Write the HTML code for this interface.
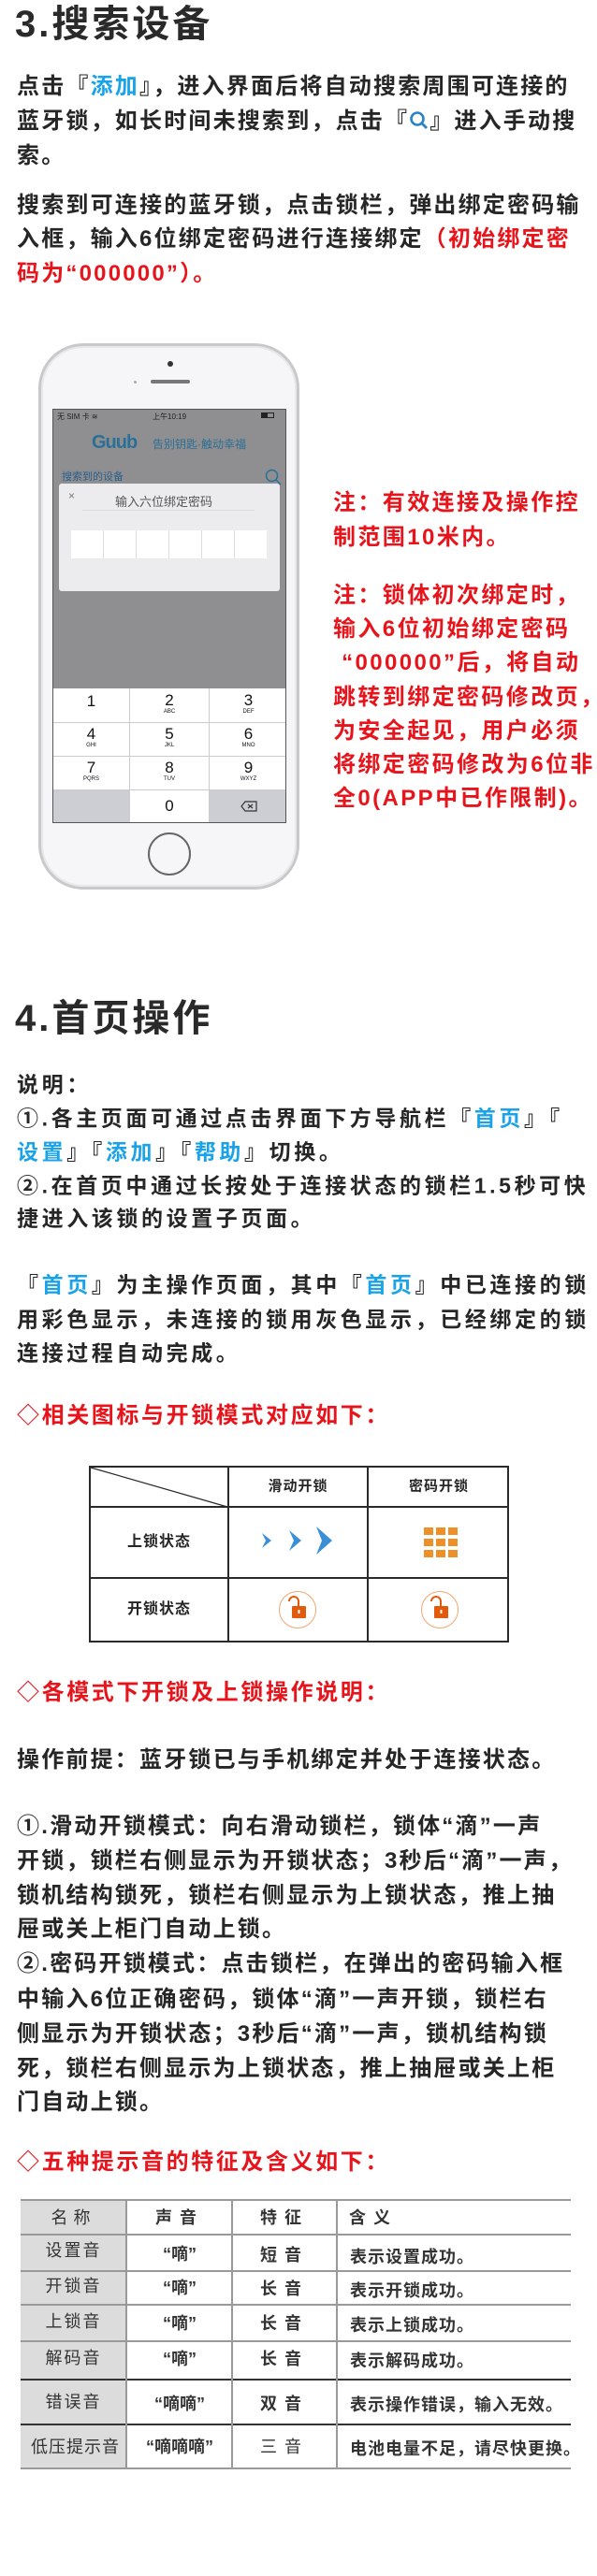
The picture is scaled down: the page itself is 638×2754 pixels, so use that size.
<!DOCTYPE html>
<html><head><meta charset="utf-8">
<style>
*{margin:0;padding:0;box-sizing:border-box}
body{width:638px;height:2754px;background:#fff;position:relative;overflow:hidden;font-family:"Liberation Sans","Noto Sans CJK SC",sans-serif;color:#262626}
.l{position:absolute;white-space:nowrap;font-weight:700;line-height:1;transform:translateY(-50%)}
.t{font-size:24px;letter-spacing:2.2px;left:18px}
.t4{font-size:23px;letter-spacing:3.6px;left:18px}
.h{font-size:40px;letter-spacing:3px;left:16px;color:#2a2a2a}
.r{color:#e8141b}
.b{color:#1aa3e8}
.n{font-size:24px;letter-spacing:2.4px;left:356px;color:#e8141b}
.rh{font-size:24px;letter-spacing:2.6px;left:18px;color:#e8141b}
.abs{position:absolute}
</style></head><body>

<div class="l h" style="top:26px">3.搜索设备</div>
<div class="l t" style="top:93px">点击『<span class="b">添加</span>』，进入界面后将自动搜索周围可连接的</div>
<div class="l t" style="top:130px">蓝牙锁，如长时间未搜索到，点击『<svg width="22" height="22" viewBox="0 0 22 22" style="vertical-align:-3px"><circle cx="9" cy="9" r="6.5" fill="none" stroke="#2a84c6" stroke-width="2.6"/><path d="M14 14l5 5" stroke="#2a84c6" stroke-width="2.8"/></svg>』进入手动搜</div>
<div class="l t" style="top:167px">索。</div>
<div class="l t" style="top:220px">搜索到可连接的蓝牙锁，点击锁栏，弹出绑定密码输</div>
<div class="l t" style="top:256px">入框，输入6位绑定密码进行连接绑定<span class="r">（初始绑定密</span></div>
<div class="l t r" style="top:293px">码为“000000”）。</div>

<!-- phone -->
<div class="abs" style="left:41px;top:367px;width:279px;height:584px;border-radius:48px;background:#f6f6f8;border:3px solid #c9c9cc;box-shadow:inset 0 0 0 2px #e8e8ea"></div>
<div class="abs" style="left:179px;top:386px;width:6px;height:6px;border-radius:3px;background:#333"></div>
<div class="abs" style="left:161px;top:406px;width:42px;height:4px;border-radius:2px;background:#777"></div>
<div class="abs" style="left:143px;top:407px;width:3px;height:3px;border-radius:2px;background:#aaa"></div>
<div class="abs" style="left:56px;top:437px;width:250px;height:443px;background:#8f8f92;border:1px solid #555;overflow:hidden">
  <div class="abs" style="left:4px;top:2px;font-size:8px;color:#222">无 SIM 卡 ≋</div>
  <div class="abs" style="left:106px;top:2px;font-size:8px;color:#222">上午10:19</div>
  <div class="abs" style="left:222px;top:3px;width:14px;height:6px;border:1px solid #222"><div style="width:6px;height:4px;background:#222"></div></div>
  <div class="abs" style="left:41px;top:24px;font-size:20px;font-weight:700;color:#2a6f95;letter-spacing:-1px">Guub</div>
  <div class="abs" style="left:106px;top:28px;font-size:12px;color:#2d6f93">告别钥匙·触动幸福</div>
  <div class="abs" style="left:9px;top:63px;font-size:11px;color:#2a5f8a">搜索到的设备</div>
  <svg class="abs" style="left:226px;top:63px" width="18" height="18"><circle cx="7.5" cy="7.5" r="6" fill="none" stroke="#2a6f9a" stroke-width="1.5"/><path d="M12 12l5 5" stroke="#2a6f9a" stroke-width="1.5"/></svg>
  <div class="abs" style="left:6px;top:79px;width:236px;height:115px;background:#ececee;border-radius:3px">
    <div class="abs" style="left:10px;top:6px;font-size:12px;color:#777">×</div>
    <div class="abs" style="left:60px;top:9px;font-size:13px;color:#555">输入六位绑定密码</div>
    <div class="abs" style="left:25px;top:28px;width:184px;height:1px;background:#ddd"></div>
    <div class="abs" style="left:13px;top:50px;width:209px;height:30px;background:#fff;display:flex">
      <div style="flex:1;border-right:1px solid #ddd"></div><div style="flex:1;border-right:1px solid #ddd"></div><div style="flex:1;border-right:1px solid #ddd"></div><div style="flex:1;border-right:1px solid #ddd"></div><div style="flex:1;border-right:1px solid #ddd"></div><div style="flex:1"></div>
    </div>
  </div>
  <div class="abs" style="left:0;top:298px;width:250px;height:145px;background:#fff;font-family:'Liberation Sans',sans-serif;color:#111">
    <div style="position:absolute;left:0;top:36px;width:250px;height:1px;background:#ccc"></div>
    <div style="position:absolute;left:0;top:72px;width:250px;height:1px;background:#ccc"></div>
    <div style="position:absolute;left:0;top:108px;width:250px;height:1px;background:#ccc"></div>
    <div style="position:absolute;left:81px;top:0;width:1px;height:145px;background:#ccc"></div>
    <div style="position:absolute;left:166px;top:0;width:1px;height:145px;background:#ccc"></div>
    <div style="position:absolute;left:0;top:109px;width:81px;height:36px;background:#ccced3"></div>
    <div style="position:absolute;left:167px;top:109px;width:83px;height:36px;background:#ccced3"></div>
    <div style="position:absolute;left:0;top:4px;width:81px;text-align:center;font-size:17px">1</div>
    <div style="position:absolute;left:82px;top:4px;width:84px;text-align:center;font-size:17px;line-height:17px">2<div style="font-size:6px;line-height:8px">ABC</div></div>
    <div style="position:absolute;left:167px;top:4px;width:83px;text-align:center;font-size:17px;line-height:17px">3<div style="font-size:6px;line-height:8px">DEF</div></div>
    <div style="position:absolute;left:0;top:40px;width:81px;text-align:center;font-size:17px;line-height:17px">4<div style="font-size:6px;line-height:8px">GHI</div></div>
    <div style="position:absolute;left:82px;top:40px;width:84px;text-align:center;font-size:17px;line-height:17px">5<div style="font-size:6px;line-height:8px">JKL</div></div>
    <div style="position:absolute;left:167px;top:40px;width:83px;text-align:center;font-size:17px;line-height:17px">6<div style="font-size:6px;line-height:8px">MNO</div></div>
    <div style="position:absolute;left:0;top:76px;width:81px;text-align:center;font-size:17px;line-height:17px">7<div style="font-size:6px;line-height:8px">PQRS</div></div>
    <div style="position:absolute;left:82px;top:76px;width:84px;text-align:center;font-size:17px;line-height:17px">8<div style="font-size:6px;line-height:8px">TUV</div></div>
    <div style="position:absolute;left:167px;top:76px;width:83px;text-align:center;font-size:17px;line-height:17px">9<div style="font-size:6px;line-height:8px">WXYZ</div></div>
    <div style="position:absolute;left:82px;top:116px;width:84px;text-align:center;font-size:17px">0</div>
    <svg style="position:absolute;left:200px;top:120px" width="18" height="12"><path d="M5 1h12v10H5L1 6z" fill="none" stroke="#333" stroke-width="1.2"/><path d="M8 4l5 4M13 4l-5 4" stroke="#333" stroke-width="1.2"/></svg>
  </div>
</div>
<div class="abs" style="left:158px;top:890px;width:46px;height:46px;border-radius:50%;border:2px solid #666"></div>

<div class="l n" style="top:538px">注：有效连接及操作控</div>
<div class="l n" style="top:575px">制范围10米内。</div>
<div class="l n" style="top:637px">注：锁体初次绑定时，</div>
<div class="l n" style="top:673px">输入6位初始绑定密码</div>
<div class="l n" style="top:709px">&nbsp;“000000”后，将自动</div>
<div class="l n" style="top:746px">跳转到绑定密码修改页，</div>
<div class="l n" style="top:782px">为安全起见，用户必须</div>
<div class="l n" style="top:818px">将绑定密码修改为6位非</div>
<div class="l n" style="top:854px">全0(APP中已作限制)。</div>

<div class="l h" style="top:1089px">4.首页操作</div>
<div class="l t4" style="top:1160px">说明：</div>
<div class="l t4" style="top:1196px">①.各主页面可通过点击界面下方导航栏『<span class="b">首页</span>』『</div>
<div class="l t4" style="top:1232px"><span class="b">设置</span>』『<span class="b">添加</span>』『<span class="b">帮助</span>』切换。</div>
<div class="l t4" style="top:1268px">②.在首页中通过长按处于连接状态的锁栏1.5秒可快</div>
<div class="l t4" style="top:1303px">捷进入该锁的设置子页面。</div>
<div class="l t4" style="top:1374px">『<span class="b">首页</span>』为主操作页面，其中『<span class="b">首页</span>』中已连接的锁</div>
<div class="l t4" style="top:1411px">用彩色显示，未连接的锁用灰色显示，已经绑定的锁</div>
<div class="l t4" style="top:1447px">连接过程自动完成。</div>
<div class="l rh" style="top:1514px">◇相关图标与开锁模式对应如下：</div>

<!-- table 1 -->
<div class="abs" style="left:95px;top:1567px;width:449px;height:189px;border:2px solid #2a2a2a"></div>
<div class="abs" style="left:243px;top:1567px;width:2px;height:189px;background:#2a2a2a"></div>
<div class="abs" style="left:392px;top:1567px;width:2px;height:189px;background:#2a2a2a"></div>
<div class="abs" style="left:95px;top:1610px;width:449px;height:2px;background:#2a2a2a"></div>
<div class="abs" style="left:95px;top:1686px;width:449px;height:2px;background:#2a2a2a"></div>
<svg class="abs" style="left:95px;top:1567px" width="150" height="45"><path d="M2 2L148 44" stroke="#2a2a2a" stroke-width="1.2"/></svg>
<div class="l" style="left:245px;width:147px;text-align:center;top:1589px;font-size:15px;letter-spacing:1px">滑动开锁</div>
<div class="l" style="left:394px;width:150px;text-align:center;top:1589px;font-size:15px;letter-spacing:1px">密码开锁</div>
<div class="l" style="left:97px;width:146px;text-align:center;top:1649px;font-size:16px;letter-spacing:1px">上锁状态</div>
<div class="l" style="left:97px;width:146px;text-align:center;top:1721px;font-size:16px;letter-spacing:1px">开锁状态</div>
<svg class="abs" style="left:278px;top:1630px" width="82" height="34"><path d="M2 9l10 8-10 8 4-8z" fill="#3a8fd6"/><path d="M31 6l13 11-13 11 5-11z" fill="#3a8fd6"/><path d="M60 2l17 15-17 15 6-15z" fill="#3a8fd6"/></svg>
<svg class="abs" style="left:453px;top:1633px" width="36" height="32"><g fill="#ed9027"><rect x="0" y="0" width="10" height="8"/><rect x="13" y="0" width="10" height="8"/><rect x="26" y="0" width="10" height="8"/><rect x="0" y="12" width="10" height="8"/><rect x="13" y="12" width="10" height="8"/><rect x="26" y="12" width="10" height="8"/><rect x="0" y="24" width="10" height="8"/><rect x="13" y="24" width="10" height="8"/><rect x="26" y="24" width="10" height="8"/></g></svg>
<svg class="abs" style="left:297px;top:1700px" width="42" height="42"><circle cx="21" cy="21" r="19.5" fill="none" stroke="#f2a56f" stroke-width="1"/><path d="M12 12a5 5 0 0 1 10 0v5" fill="none" stroke="#e25a0b" stroke-width="2"/><rect x="15" y="17" width="15" height="13" rx="1" fill="#e25a0b"/><rect x="21.5" y="21" width="2" height="4" fill="#fff"/></svg>
<svg class="abs" style="left:449px;top:1700px" width="42" height="42"><circle cx="21" cy="21" r="19.5" fill="none" stroke="#f2a56f" stroke-width="1"/><path d="M12 12a5 5 0 0 1 10 0v5" fill="none" stroke="#e25a0b" stroke-width="2"/><rect x="15" y="17" width="15" height="13" rx="1" fill="#e25a0b"/><rect x="21.5" y="21" width="2" height="4" fill="#fff"/></svg>

<div class="l rh" style="top:1810px">◇各模式下开锁及上锁操作说明：</div>
<div class="l t" style="top:1882px">操作前提：蓝牙锁已与手机绑定并处于连接状态。</div>
<div class="l t" style="top:1953px">①.滑动开锁模式：向右滑动锁栏，锁体“滴”一声</div>
<div class="l t" style="top:1990px">开锁，锁栏右侧显示为开锁状态；3秒后“滴”一声，</div>
<div class="l t" style="top:2027px">锁机结构锁死，锁栏右侧显示为上锁状态，推上抽</div>
<div class="l t" style="top:2063px">屉或关上柜门自动上锁。</div>
<div class="l t" style="top:2100px">②.密码开锁模式：点击锁栏，在弹出的密码输入框</div>
<div class="l t" style="top:2138px">中输入6位正确密码，锁体“滴”一声开锁，锁栏右</div>
<div class="l t" style="top:2175px">侧显示为开锁状态；3秒后“滴”一声，锁机结构锁</div>
<div class="l t" style="top:2212px">死，锁栏右侧显示为上锁状态，推上抽屉或关上柜</div>
<div class="l t" style="top:2248px">门自动上锁。</div>
<div class="l rh" style="top:2312px">◇五种提示音的特征及含义如下：</div>

<!-- table 2 -->
<div class="abs" style="left:22px;top:2352px;width:113px;height:288px;background:#dcdcdc"></div>
<div class="abs" style="left:22px;top:2351px;width:588px;height:2px;background:#999"></div>
<div class="abs" style="left:22px;top:2388px;width:588px;height:2px;background:#999"></div>
<div class="abs" style="left:22px;top:2427px;width:588px;height:2px;background:#999"></div>
<div class="abs" style="left:22px;top:2463px;width:588px;height:2px;background:#999"></div>
<div class="abs" style="left:22px;top:2502px;width:588px;height:2px;background:#999"></div>
<div class="abs" style="left:22px;top:2543px;width:588px;height:2px;background:#333"></div>
<div class="abs" style="left:22px;top:2591px;width:588px;height:2px;background:#333"></div>
<div class="abs" style="left:22px;top:2638px;width:588px;height:2px;background:#999"></div>
<div class="abs" style="left:134px;top:2352px;width:2px;height:288px;background:#999"></div>
<div class="abs" style="left:247px;top:2352px;width:2px;height:288px;background:#999"></div>
<div class="abs" style="left:359px;top:2352px;width:2px;height:288px;background:#999"></div>

<div style="position:absolute;left:0;top:0;font-size:18px;color:#333">
<div class="l" style="left:22px;width:113px;text-align:center;top:2371px;font-weight:400;letter-spacing:6px">名称</div>
<div class="l" style="left:136px;width:112px;text-align:center;top:2371px;letter-spacing:8px">声音</div>
<div class="l" style="left:249px;width:110px;text-align:center;top:2371px;letter-spacing:8px">特征</div>
<div class="l" style="left:373px;top:2371px;letter-spacing:8px">含义</div>

<div class="l" style="left:22px;width:113px;text-align:center;top:2406px;font-weight:400;letter-spacing:2px">设置音</div>
<div class="l" style="left:22px;width:113px;text-align:center;top:2444px;font-weight:400;letter-spacing:2px">开锁音</div>
<div class="l" style="left:22px;width:113px;text-align:center;top:2482px;font-weight:400;letter-spacing:2px">上锁音</div>
<div class="l" style="left:22px;width:113px;text-align:center;top:2521px;font-weight:400;letter-spacing:2px">解码音</div>
<div class="l" style="left:22px;width:113px;text-align:center;top:2568px;font-weight:400;letter-spacing:2px">错误音</div>
<div class="l" style="left:24px;width:113px;text-align:center;top:2616px;font-weight:400;letter-spacing:1px">低压提示音</div>

<div class="l" style="left:136px;width:112px;text-align:center;top:2410px">“嘀”</div>
<div class="l" style="left:136px;width:112px;text-align:center;top:2446px">“嘀”</div>
<div class="l" style="left:136px;width:112px;text-align:center;top:2484px">“嘀”</div>
<div class="l" style="left:136px;width:112px;text-align:center;top:2522px">“嘀”</div>
<div class="l" style="left:136px;width:112px;text-align:center;top:2570px">“嘀嘀”</div>
<div class="l" style="left:136px;width:112px;text-align:center;top:2616px">“嘀嘀嘀”</div>

<div class="l" style="left:249px;width:110px;text-align:center;top:2411px;letter-spacing:8px">短音</div>
<div class="l" style="left:249px;width:110px;text-align:center;top:2447px;letter-spacing:8px">长音</div>
<div class="l" style="left:249px;width:110px;text-align:center;top:2484px;letter-spacing:8px">长音</div>
<div class="l" style="left:249px;width:110px;text-align:center;top:2522px;letter-spacing:8px">长音</div>
<div class="l" style="left:249px;width:110px;text-align:center;top:2570px;letter-spacing:8px">双音</div>
<div class="l" style="left:249px;width:110px;text-align:center;top:2616px;letter-spacing:8px;font-weight:400">三音</div>

<div class="l" style="left:374px;top:2413px;letter-spacing:1px">表示设置成功。</div>
<div class="l" style="left:374px;top:2449px;letter-spacing:1px">表示开锁成功。</div>
<div class="l" style="left:374px;top:2486px;letter-spacing:1px">表示上锁成功。</div>
<div class="l" style="left:374px;top:2524px;letter-spacing:1px">表示解码成功。</div>
<div class="l" style="left:374px;top:2571px;letter-spacing:1px">表示操作错误，输入无效。</div>
<div class="l" style="left:374px;top:2618px;letter-spacing:1px">电池电量不足，请尽快更换。</div>
</div>
</body></html>
